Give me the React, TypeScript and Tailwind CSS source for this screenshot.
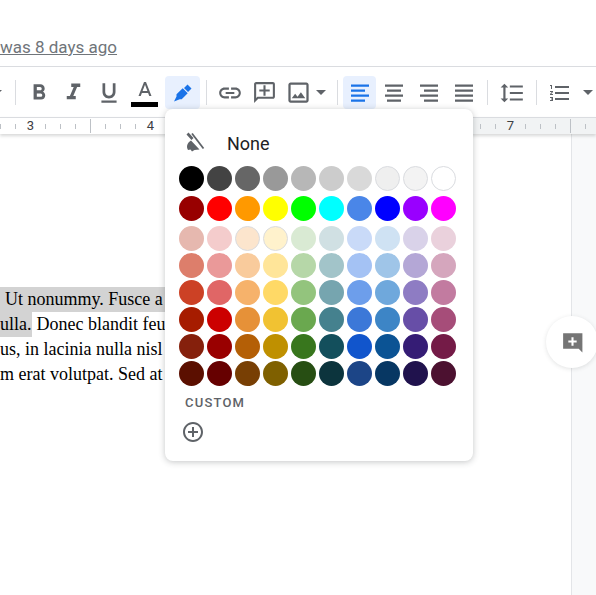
import type { ReactNode } from "react";

const greys = ["#000000", "#434343", "#666666", "#999999", "#b7b7b7", "#cccccc", "#d9d9d9", "#efefef", "#f3f3f3", "#ffffff"];
const brights = ["#980000", "#ff0000", "#ff9900", "#ffff00", "#00ff00", "#00ffff", "#4a86e8", "#0000ff", "#9900ff", "#ff00ff"];
const shades = [
  ["#e6b8af", "#f4cccc", "#fce5cd", "#fff2cc", "#d9ead3", "#d0e0e3", "#c9daf8", "#cfe2f3", "#d9d2e9", "#ead1dc"],
  ["#dd7e6b", "#ea9999", "#f9cb9c", "#ffe599", "#b6d7a8", "#a2c4c9", "#a4c2f4", "#9fc5e8", "#b4a7d6", "#d5a6bd"],
  ["#cc4125", "#e06666", "#f6b26b", "#ffd966", "#93c47d", "#76a5af", "#6d9eeb", "#6fa8dc", "#8e7cc3", "#c27ba0"],
  ["#a61c00", "#cc0000", "#e69138", "#f1c232", "#6aa84f", "#45818e", "#3c78d8", "#3d85c6", "#674ea7", "#a64d79"],
  ["#85200c", "#990000", "#b45f06", "#bf9000", "#38761d", "#134f5c", "#1155cc", "#0b5394", "#351c75", "#741b47"],
  ["#5b0f00", "#660000", "#783f04", "#7f6000", "#274e13", "#0c343d", "#1c4587", "#073763", "#20124d", "#4c1130"],
];
const outlined = ["#efefef", "#f3f3f3", "#ffffff", "#fce5cd", "#fff2cc"];

const icons = {
  bold: "M15.6 10.79c.97-.67 1.65-1.77 1.65-2.79 0-2.26-1.75-4-4-4H7v14h7.04c2.09 0 3.71-1.7 3.71-3.79 0-1.52-.86-2.82-2.15-3.42zM10 6.5h3c.83 0 1.5.67 1.5 1.5s-.67 1.5-1.5 1.5h-3v-3zm3.5 9H10v-3h3.5c.83 0 1.5.67 1.5 1.5s-.67 1.5-1.5 1.5z",
  italic: "M10 4v3h2.21l-3.42 8H6v3h8v-3h-2.21l3.42-8H18V4z",
  underline: "M12 17c3.31 0 6-2.69 6-6V3h-2.5v8c0 1.93-1.57 3.5-3.5 3.5S8.5 12.93 8.5 11V3H6v8c0 3.31 2.69 6 6 6zm-7 2v2h14v-2H5z",
  link: "M3.9 12c0-1.71 1.39-3.1 3.1-3.1h4V7H7c-2.76 0-5 2.24-5 5s2.24 5 5 5h4v-1.9H7c-1.71 0-3.1-1.39-3.1-3.1zM8 13h8v-2H8v2zm9-6h-4v1.9h4c1.71 0 3.1 1.39 3.1 3.1s-1.39 3.1-3.1 3.1h-4V17h4c2.76 0 5-2.24 5-5s-2.24-5-5-5z",
  comment: "M20 2H4c-1.1 0-2 .9-2 2v18l4-4h14c1.1 0 2-.9 2-2V4c0-1.1-.9-2-2-2zm0 14H5.17L4 17.17V4h16v12zM13 5h-2v4H7v2h4v4h2v-4h4V9h-4z",
  image: "M19 5v14H5V5h14m0-2H5c-1.1 0-2 .9-2 2v14c0 1.1.9 2 2 2h14c1.1 0 2-.9 2-2V5c0-1.1-.9-2-2-2zm-4.86 8.86l-3 3.87L9 13.14 6 17h12l-3.86-5.14z",
  left: "M3 3.5h18v2.3H3zM3 8.5h14v2.3H3zM3 13.5h18v2.3H3zM3 18.5h14v2.3H3z",
  center: "M3 3.5h18v2.3H3zM5 8.5h14v2.3H5zM3 13.5h18v2.3H3zM5 18.5h14v2.3H5z",
  right: "M3 3.5h18v2.3H3zM7 8.5h14v2.3H7zM3 13.5h18v2.3H3zM7 18.5h14v2.3H7z",
  justify: "M3 3.5h18v2.3H3zM3 8.5h18v2.3H3zM3 13.5h18v2.3H3zM3 18.5h18v2.3H3z",
  spacing: "M6 7h2.5L5 3.5 1.5 7H4v10H1.5L5 20.5 8.5 17H6V7zm4-2v2h12V5H10zm0 14h12v-2H10v2zm0-6h12v-2H10v2z",
  numbered: "M2 17h2v.5H3v1h1v.5H2v1h3v-4H2v1zm1-9h1V4H2v1h1v3zm-1 3h1.8L2 13.1v.9h3v-1H3.2L5 10.9V10H2v1zm5-6v2h14V5H7zm0 14h14v-2H7v2zm0-6h14v-2H7v2z",
  pen: "M16.5 3.5l4 4-3.5 3.5-4-4zM11.7 7.3l5 5-6 6H8.8L3 20.5l2.5-5v-2.2z",
  plusCircle: "M13 7h-2v4H7v2h4v4h2v-4h4v-2h-4V7zm-1-5C6.48 2 2 6.48 2 12s4.48 10 10 10 10-4.48 10-10S17.52 2 12 2zm0 18c-4.41 0-8-3.59-8-8s3.59-8 8-8 8 3.59 8 8-3.59 8-8 8z",
  bubble: "M21 3H3v15h15l3.5 3.5V3zM13 7v3h3v2h-3v3h-2v-3H8v-2h3V7h2z",
};

function Icon({ d, className }: { d: string; className?: string }) {
  return (
    <svg viewBox="0 0 24 24" fill="currentColor" fillRule="evenodd" className={className ?? "h-6 w-6"}>
      <path d={d} />
    </svg>
  );
}

function Btn({ d, className, size, active }: { d: string; className: string; size?: string; active?: boolean }) {
  return (
    <div className={`flex h-[33px] items-center justify-center rounded-sm ${className} ${active ? "bg-[#e8f0fe] text-[#1a73e8]" : ""}`}>
      <Icon d={d} className={size ?? "h-6 w-6"} />
    </div>
  );
}

const Sep = ({ className }: { className: string }) => <div className={`h-[25px] w-px bg-[#dadce0] ${className}`} />;

const Caret = ({ className }: { className: string }) => (
  <div className={`h-0 w-0 border-x-[5px] border-t-[5px] border-x-transparent border-t-[#5f6368] ${className}`} />
);

function Swatches({ colors }: { colors: string[] }) {
  return (
    <div className="flex gap-[3px]">
      {colors.map((c) => (
        <div
          key={c}
          className={`h-[25px] w-[25px] rounded-full ${outlined.includes(c) ? "border border-[#dadce0]" : ""}`}
          style={{ backgroundColor: c }}
        />
      ))}
    </div>
  );
}

function Ruler() {
  const cells: ReactNode[] = [];
  for (let i = 0; i < 41; i++) {
    const num = i % 8 === 2 ? String(3 + (i - 2) / 8) : null;
    const tall = i % 8 === 6;
    cells.push(
      <div key={i} className={`flex h-full w-[15px] shrink-0 items-center justify-center ${i >= 30 ? "bg-[#f1f3f4]" : "bg-white"}`}>
        {num ? (
          <span className="text-[13px] text-[#3c4043]">{num}</span>
        ) : (
          <div className={`w-px bg-[#bdc1c6] ${tall ? "h-[14px]" : "h-[5px]"}`} />
        )}
      </div>
    );
  }
  return (
    <div className="relative z-10 flex h-[17px] border-t border-[#dadce0] shadow-[0_2px_3px_rgba(60,64,67,0.2)]">
      <div className="-ml-[7px] flex h-full">{cells}</div>
    </div>
  );
}

export default function App() {
  return (
    <div
      className="relative h-[595px] w-[596px] overflow-hidden bg-white text-[#5f6368]"
      style={{ fontFamily: "Roboto, sans-serif" }}
    >
      <div className="h-[67px] border-b border-[#dadce0] pt-[35px]">
        <span className="block text-[17px] leading-6 whitespace-nowrap text-[#70757a] underline">was 8 days ago</span>
      </div>

      <div className="flex h-[50px] items-center pt-[1px]">
        <Caret className="-ml-[8px]" />
        <Sep className="ml-[13px]" />
        <Btn d={icons.bold} size="h-[26px] w-[26px]" className="ml-[5px] w-[35px]" />
        <Btn d={icons.italic} size="h-[27px] w-[27px]" className="w-[35px]" />
        <Btn d={icons.underline} size="h-[26px] w-[26px]" className="w-[35px]" />
        <div className="ml-[1px] flex h-[33px] w-[35px] flex-col items-center">
          <svg viewBox="0 0 24 24" fill="currentColor" fillRule="evenodd" className="mt-[3px] h-[24px] w-6 shrink-0">
            <path d="M11 3L5.5 17h2.25l1.12-3h6.25l1.12 3h2.25L13 3h-2zm-1.38 9L12 5.67 14.38 12H9.62z" />
          </svg>
          <div className="-mt-[1px] h-[5px] w-[27px] shrink-0 bg-black" />
        </div>
        <Btn d={icons.pen} className="ml-[3px] w-[35px]" active />
        <Sep className="ml-[6px]" />
        <Btn d={icons.link} size="h-[26px] w-[26px]" className="ml-[5px] w-[35px]" />
        <Btn d={icons.comment} size="h-[25px] w-[25px]" className="w-[35px]" />
        <Btn d={icons.image} size="h-[27px] w-[27px]" className="w-[33px]" />
        <Caret className="ml-[1px]" />
        <Sep className="ml-[11px]" />
        <Btn d={icons.left} className="ml-[5px] w-[33px]" active />
        <Btn d={icons.center} className="ml-[1px] w-[34px]" />
        <Btn d={icons.right} className="ml-[1px] w-[34px]" />
        <Btn d={icons.justify} className="ml-[1px] w-[34px]" />
        <Sep className="ml-[6px]" />
        <Btn d={icons.spacing} size="h-[26px] w-[26px]" className="ml-[7px] w-[34px]" />
        <Sep className="ml-[7px]" />
        <Btn d={icons.numbered} className="ml-[6px] w-[34px]" />
        <Caret className="ml-[6px]" />
      </div>

      <Ruler />

      <div className="flex h-[461px]">
        <div
          className="min-w-0 flex-1 overflow-hidden pt-[153px] text-[18px] leading-[25px] whitespace-nowrap text-black"
          style={{ fontFamily: '"Liberation Serif", serif' }}
        >
          <div className="flex">
            <span className="bg-[#d3d3d3] pr-[12px] pl-[5px]">Ut nonummy. Fusce a</span>
          </div>
          <div className="flex">
            <span className="bg-[#d3d3d3]">ulla.</span>
            <span className="ml-[5px]">Donec blandit feu</span>
          </div>
          <div>us, in lacinia nulla nisl</div>
          <div>m erat volutpat. Sed at</div>
        </div>
        <div className="w-[25px] border-l border-[#e3e5e8] bg-[#f8f9fa]" />
      </div>

      {/* highlight colour menu */}
      <div className="absolute top-[109px] left-[165px] z-20 h-[352px] w-[308px] rounded-lg bg-white px-[14px] pt-[17px] shadow-[0_1px_6px_rgba(60,64,67,0.3)]">
        <div className="flex h-[34px] items-center">
          <svg viewBox="0 0 24 24" className="-mt-[2px] ml-[4px] h-6 w-6" fill="#5f6368">
            <path d="M3.5 4.5l2-2 5 5.5-2 2zM8 10.5l8.5 9-5 .5-2.5 1.5-1.5-2-2.5.5C3 17 4 13 8 10.5z" />
            <path d="M9 3.5l11.5 15" stroke="#5f6368" strokeWidth="1.8" fill="none" />
          </svg>
          <span className="ml-[20px] text-[18px] text-[#202124]">None</span>
        </div>
        <div className="mt-[6px] flex flex-col gap-[5px]">
          <Swatches colors={greys} />
          <Swatches colors={brights} />
          <div className="flex flex-col gap-[2px]">
            {shades.map((row) => (
              <Swatches key={row[0]} colors={row} />
            ))}
          </div>
        </div>
        <div className="mt-[9px] ml-[6px] text-[13px] leading-4 font-medium tracking-[1.2px] text-[#5f6368]">CUSTOM</div>
        <div className="mt-[9px] ml-[2px]">
          <Icon d={icons.plusCircle} className="h-6 w-6" />
        </div>
      </div>

      <div className="absolute top-[316px] left-[546px] z-20 flex h-[52px] w-[52px] items-center justify-center rounded-full bg-white text-[#757575] shadow-[0_1px_4px_rgba(60,64,67,0.15)]">
        <Icon d={icons.bubble} className="h-[25px] w-[25px]" />
      </div>
    </div>
  );
}
